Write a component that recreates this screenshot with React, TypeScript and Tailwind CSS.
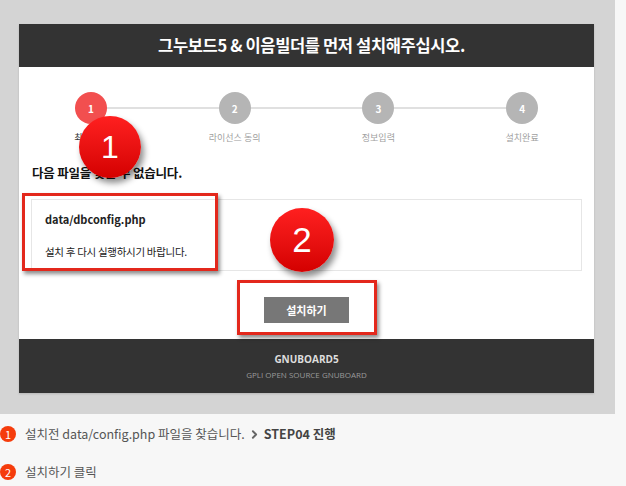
import React from 'react';
import { ChevronRight } from 'lucide-react';

const STEPS = [
    { num: 1, label: '최소사양', active: true },
    { num: 2, label: '라이선스 동의', active: false },
    { num: 3, label: '정보입력', active: false },
    { num: 4, label: '설치완료', active: false },
];

const kr = { fontFamily: '"Noto Sans CJK KR", "Noto Sans", sans-serif' };

// big red annotation circle
const Marker = ({ n, className }: { n: number; className: string }) => (
    <div
        className={`absolute flex items-center justify-center rounded-full bg-gradient-to-b from-[#ff1f1f] to-[#d40000] text-white shadow-[3px_5px_6px_rgba(0,0,0,0.45)] ${className}`}
        style={{ fontFamily: '"Liberation Sans", Arial, sans-serif' }}
    >
        {n}
    </div>
);

const NoteBadge = ({ n }: { n: number }) => (
    <span className="flex h-4 w-4 shrink-0 items-center justify-center rounded-full bg-[#f53c0c] text-[11px] leading-none text-white">
        {n}
    </span>
);

export default function App() {
    return (
        <div className="relative h-[486px] w-[626px] overflow-hidden bg-[#f7f7f7]" style={kr}>
            <div className="h-[414px] w-[615px] bg-[#d4d4d4] pl-[19px] pt-[24px]">
                <div className="flex w-[575px] flex-col shadow-[0_1px_2px_rgba(0,0,0,0.15)]">
                    <div className="flex h-[43px] items-center justify-center bg-[#333333] pl-[10px] text-[16.5px] font-bold tracking-[-0.35px] text-white">
                        그누보드5 &amp; 이음빌더를 먼저 설치해주십시오.
                    </div>

                    <div className="flex h-[272px] flex-col bg-white px-[12px]">
                        <div className="relative -mx-[12px] mt-[25px] grid grid-cols-4">
                            <div className="absolute left-[72px] right-[72px] top-[15px] h-[2px] bg-[#e0e0e0]" />
                            {STEPS.map(s => (
                                <div key={s.num} className="relative flex flex-col items-center">
                                    <div
                                        className={`flex h-[32px] w-[32px] items-center justify-center rounded-full text-[10px] font-bold text-white ${s.active ? 'bg-[#f24f4f]' : 'bg-[#b5b5b5]'}`}
                                    >
                                        {s.num}
                                    </div>
                                    <div className={`mt-[8px] text-[9px] leading-[11px] ${s.active ? 'text-[#333]' : 'text-[#a0a0a0]'}`}>
                                        {s.label}
                                    </div>
                                </div>
                            ))}
                        </div>

                        <h2 className="mt-[22px] pl-[1px] text-[12.5px] font-bold leading-[16px] tracking-[-0.2px] text-[#111]">다음 파일을 찾을 수 없습니다.</h2>

                        <div className="mt-[18px] flex h-[72px] flex-col border border-[#e6e6e6] pl-[13px] text-[11px] text-[#222]">
                            <p className="mt-[11px] font-bold leading-[16px]">data/dbconfig.php</p>
                            <p className="mt-[17px] text-[10.5px] leading-[16px] tracking-[-0.3px]">설치 후 다시 실행하시기 바랍니다.</p>
                        </div>

                        <div className="mt-[26px] flex justify-center">
                            <button className="h-[26px] w-[85px] bg-[#777777] text-[11px] font-bold text-white">설치하기</button>
                        </div>
                    </div>

                    <div
                        className="flex h-[54px] flex-col items-center justify-center bg-[#333333]"
                        style={{ fontFamily: '"Open Sans", "Noto Sans", sans-serif' }}
                    >
                        <div className="text-[10px] font-bold leading-[14px] text-[#dddddd]">GNUBOARD5</div>
                        <div className="mt-[3px] text-[8px] leading-[11px] text-[#9a9a9a]">GPLI OPEN SOURCE GNUBOARD</div>
                    </div>
                </div>
            </div>

            <div className="flex flex-col gap-[19px] pt-[11px] text-[12.5px] text-[#555]">
                <div className="flex items-center gap-[9px]">
                    <NoteBadge n={1} />
                    <span className="flex items-center">
                        설치전 data/config.php 파일을 찾습니다.
                        <ChevronRight className="mx-[3px] h-[13px] w-[13px] text-[#666]" strokeWidth={3.5} />
                        <b className="text-[#444]">STEP04 진행</b>
                    </span>
                </div>
                <div className="flex items-center gap-[9px]">
                    <NoteBadge n={2} />
                    <span>설치하기 클릭</span>
                </div>
            </div>

            {/* annotation overlays */}
            <div className="absolute left-[22px] top-[193px] h-[78px] w-[196px] border-[3px] border-[#e3281c] shadow-[2px_3px_4px_rgba(0,0,0,0.45)]" />
            <div className="absolute left-[237px] top-[280px] h-[55px] w-[140px] border-[3px] border-[#e3281c] shadow-[2px_3px_4px_rgba(0,0,0,0.45)]" />
            <Marker n={1} className="left-[79px] top-[116px] h-[62px] w-[62px] text-[32px]" />
            <Marker n={2} className="left-[270px] top-[208px] h-[64px] w-[64px] text-[35px]" />
        </div>
    );
}
